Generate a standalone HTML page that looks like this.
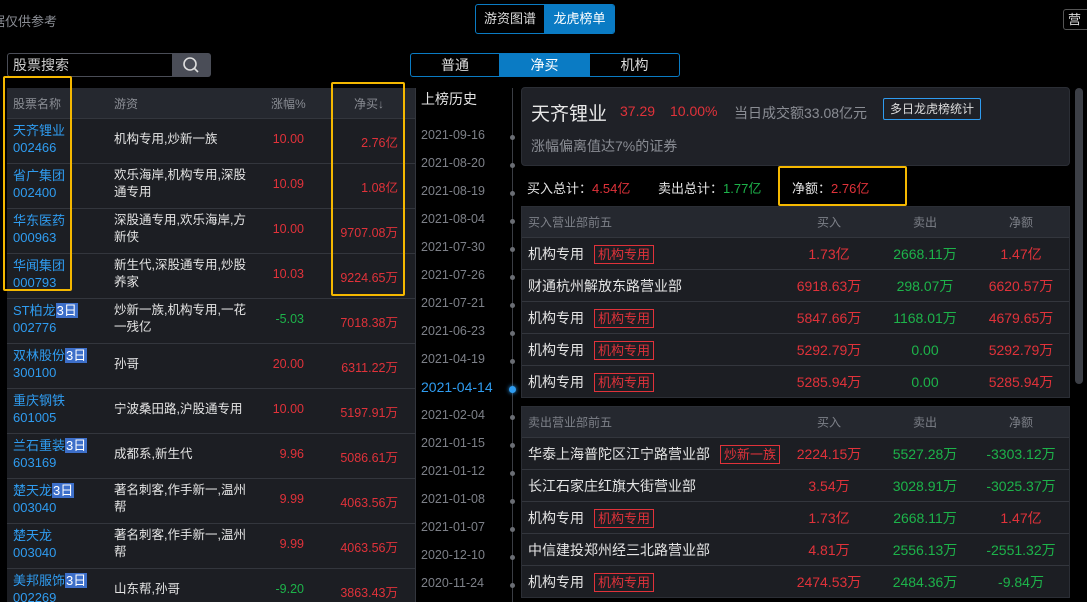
<!DOCTYPE html>
<html style="width:1087px;height:602px;overflow:hidden"><head><meta charset="utf-8"><style>
*{margin:0;padding:0;box-sizing:border-box}
body{width:1087px;height:602px;background:#000;overflow:hidden;position:relative;font-family:"Liberation Sans","Noto Sans CJK SC",sans-serif;font-size:13px;color:#ddd}
.a{position:absolute;white-space:nowrap}
.r{color:#e0323a}.g{color:#1db34a}.b{color:#2f9cf0}.gr{color:#8a8d94}
.yb{position:absolute;border:2px solid #f5b800;border-radius:2px}
.lt{position:absolute;left:7px;top:88px;width:408px;height:514px;background:#1c1e23}
.lh{position:absolute;left:0;top:0;width:408px;height:30px;background:#25282f}
.tag3{background:#3d6fc9;color:#fff;padding:0 1px}
.tbl{position:absolute;left:521px;width:549px;background:#1c1e23;border:1px solid #2b2e35}
.th{height:30px;background:#25282f;position:relative;color:#7d8088;font-size:12px}
.tr{height:32px;border-top:1px solid #33363d;position:relative;font-size:14px}
.tr span,.th span{position:absolute;top:50%;transform:translateY(-50%)}
.c1{left:6px;color:#e4e4e4}.c2{left:260px;width:94px;text-align:center}.c3{left:356px;width:94px;text-align:center}.c4{left:452px;width:94px;text-align:center}
.tg{border:1px solid #e0323a;color:#e0323a;font-size:13px;padding:0 3px;margin-left:10px;line-height:17px;display:inline-block}
.dt{position:absolute;left:421px;color:#7d8088;font-size:12.5px}
.dot{position:absolute;left:510px;width:5px;height:5px;border-radius:50%;background:#6a6d74}
</style></head><body>
<div class="a gr" style="left:-8px;top:11px;font-size:13px">据仅供参考</div>
<div class="a" style="left:475px;top:4px;width:140px;height:30px;border:1px solid #0a7bc4;border-radius:3px;overflow:hidden">
<div class="a" style="left:0;top:0;width:68px;height:28px;line-height:28px;text-align:center;color:#ddd">游资图谱</div>
<div class="a" style="left:68px;top:0;width:71px;height:28px;line-height:28px;text-align:center;background:#0a7bc4;color:#fff">龙虎榜单</div></div>
<div class="a" style="left:1063px;top:9px;width:30px;height:21px;border:1px solid #555;border-radius:3px;line-height:19px;padding-left:4px">营</div>
<div class="a" style="left:7px;top:53px;width:166px;height:24px;border:1px solid #4a4d57;border-radius:3px 0 0 3px;padding-left:5px;line-height:22px;font-size:14px;color:#ccc">股票搜索</div>
<div class="a" style="left:172px;top:53px;width:39px;height:24px;background:#4a4d57;border-radius:0 3px 3px 0">
<svg width="39" height="24"><circle cx="18" cy="11" r="6" stroke="#ddd" stroke-width="1.6" fill="none"/><line x1="22" y1="15" x2="26" y2="19" stroke="#ddd" stroke-width="1.6"/></svg></div>
<div class="a" style="left:410px;top:53px;width:270px;height:24px;border:1px solid #0a7bc4;border-radius:3px;overflow:hidden;font-size:14px">
<div class="a" style="left:0;width:88px;height:22px;line-height:22px;text-align:center">普通</div>
<div class="a" style="left:88px;width:91px;height:22px;line-height:22px;text-align:center;background:#0a7bc4;color:#fff">净买</div>
<div class="a" style="left:179px;width:89px;height:22px;line-height:22px;text-align:center">机构</div></div>

<div class="lt">
<div class="lh"><span class="a gr" style="left:6px;top:7px;font-size:12px">股票名称</span><span class="a gr" style="left:107px;top:7px;font-size:12px">游资</span><span class="a gr" style="left:264px;top:7px;font-size:12px">涨幅%</span><span class="a gr" style="left:347px;top:7px;font-size:12px">净买↓</span></div>
</div>
<div id="rows"></div>
<div class="a" style="left:415px;top:88px;width:1px;height:514px;background:#33363d"></div>
<div class="a" style="left:421px;top:89px;font-size:14px;color:#e4e4e4">上榜历史</div>
<div class="a" style="left:512px;top:88px;width:1px;height:514px;background:#3a3d44"></div>
<div id="dates"></div>

<div class="a" style="left:521px;top:87px;width:549px;height:79px;background:#1f2127;border:1px solid #2b2e35;border-radius:4px"></div>
<div class="a" style="left:531px;top:99px;font-size:19px;color:#e8e8e8">天齐锂业</div>
<div class="a r" style="left:620px;top:103px;font-size:14px">37.29</div>
<div class="a r" style="left:670px;top:103px;font-size:14px">10.00%</div>
<div class="a gr" style="left:734px;top:103px;font-size:14px">当日成交额33.08亿元</div>
<div class="a" style="left:883px;top:98px;width:98px;height:22px;border:1px solid #2f9cf0;border-radius:2px;font-size:12px;line-height:20px;text-align:center;color:#ddd">多日龙虎榜统计</div>
<div class="a gr" style="left:531px;top:136px;font-size:14px">涨幅偏离值达7%的证券</div>
<div class="a" style="left:527px;top:178px;font-size:13px;color:#e4e4e4">买入总计：<span class="r">4.54亿</span></div>
<div class="a" style="left:658px;top:178px;font-size:13px;color:#e4e4e4">卖出总计：<span class="g">1.77亿</span></div>
<div class="a" style="left:792px;top:178px;font-size:13px;color:#e4e4e4">净额：<span class="r">2.76亿</span></div>

<div class="tbl" style="top:206px">
<div class="th"><span class="c1" style="color:#7d8088">买入营业部前五</span><span class="c2">买入</span><span class="c3">卖出</span><span class="c4">净额</span></div>
<div class="tr"><span class="c1">机构专用<b class="tg" style="font-weight:normal">机构专用</b></span><span class="c2 r">1.73亿</span><span class="c3 g">2668.11万</span><span class="c4 r">1.47亿</span></div>
<div class="tr"><span class="c1">财通杭州解放东路营业部</span><span class="c2 r">6918.63万</span><span class="c3 g">298.07万</span><span class="c4 r">6620.57万</span></div>
<div class="tr"><span class="c1">机构专用<b class="tg" style="font-weight:normal">机构专用</b></span><span class="c2 r">5847.66万</span><span class="c3 g">1168.01万</span><span class="c4 r">4679.65万</span></div>
<div class="tr"><span class="c1">机构专用<b class="tg" style="font-weight:normal">机构专用</b></span><span class="c2 r">5292.79万</span><span class="c3 g">0.00</span><span class="c4 r">5292.79万</span></div>
<div class="tr"><span class="c1">机构专用<b class="tg" style="font-weight:normal">机构专用</b></span><span class="c2 r">5285.94万</span><span class="c3 g">0.00</span><span class="c4 r">5285.94万</span></div>
</div>
<div class="tbl" style="top:406px">
<div class="th"><span class="c1" style="color:#7d8088">卖出营业部前五</span><span class="c2">买入</span><span class="c3">卖出</span><span class="c4">净额</span></div>
<div class="tr"><span class="c1">华泰上海普陀区江宁路营业部<b class="tg" style="font-weight:normal">炒新一族</b></span><span class="c2 r">2224.15万</span><span class="c3 g">5527.28万</span><span class="c4 g">-3303.12万</span></div>
<div class="tr"><span class="c1">长江石家庄红旗大街营业部</span><span class="c2 r">3.54万</span><span class="c3 g">3028.91万</span><span class="c4 g">-3025.37万</span></div>
<div class="tr"><span class="c1">机构专用<b class="tg" style="font-weight:normal">机构专用</b></span><span class="c2 r">1.73亿</span><span class="c3 g">2668.11万</span><span class="c4 r">1.47亿</span></div>
<div class="tr"><span class="c1">中信建投郑州经三北路营业部</span><span class="c2 r">4.81万</span><span class="c3 g">2556.13万</span><span class="c4 g">-2551.32万</span></div>
<div class="tr"><span class="c1">机构专用<b class="tg" style="font-weight:normal">机构专用</b></span><span class="c2 r">2474.53万</span><span class="c3 g">2484.36万</span><span class="c4 g">-9.84万</span></div>
</div>
<div class="a" style="left:1075px;top:88px;width:8px;height:296px;background:#3c3f46;border-radius:4px"></div>

<div class="yb" style="left:3px;top:76px;width:69px;height:215px"></div>
<div class="yb" style="left:331px;top:82px;width:74px;height:214px"></div>
<div class="yb" style="left:778px;top:166px;width:129px;height:40px"></div>

<script>
var R=[["天齐锂业","002466","机构专用,炒新一族","10.00","2.76亿",0,0],
["省广集团","002400","欢乐海岸,机构专用,深股<br>通专用","10.09","1.08亿",0,0],
["华东医药","000963","深股通专用,欢乐海岸,方<br>新侠","10.00","9707.08万",0,0],
["华闻集团","000793","新生代,深股通专用,炒股<br>养家","10.03","9224.65万",0,0],
["ST柏龙","002776","炒新一族,机构专用,一花<br>一残亿","-5.03","7018.38万",1,1],
["双林股份","300100","孙哥","20.00","6311.22万",1,0],
["重庆钢铁","601005","宁波桑田路,沪股通专用","10.00","5197.91万",0,0],
["兰石重装","603169","成都系,新生代","9.96","5086.61万",1,0],
["楚天龙","003040","著名刺客,作手新一,温州<br>帮","9.99","4063.56万",1,0],
["楚天龙","003040","著名刺客,作手新一,温州<br>帮","9.99","4063.56万",0,0],
["美邦服饰","002269","山东帮,孙哥","-9.20","3863.43万",1,1]];
var h="";R.forEach(function(r,i){var t=118+i*45;
h+='<div class="a" style="left:7px;top:'+t+'px;width:408px;height:45px;border-top:1px solid #33363d;overflow:hidden;max-height:'+(602-t)+'px"></div>';
h+='<div class="a b" style="left:13px;top:'+(t+4)+'px;font-size:13px;line-height:17px">'+r[0]+(r[5]?'<span class="tag3">3日</span>':'')+'<br>'+r[1]+'</div>';
var two=r[2].indexOf('<br>')>0;
h+='<div class="a" style="left:114px;top:'+(t+(two?4:13))+'px;font-size:12.5px;line-height:17px;color:#e4e4e4">'+r[2]+'</div>';
h+='<div class="a '+(r[6]?'g':'r')+'" style="left:250px;width:54px;text-align:right;top:'+(t+14)+'px;font-size:12.5px">'+r[3]+'</div>';
h+='<div class="a r" style="left:320px;width:78px;text-align:right;top:'+(t+14)+'px;font-size:12.5px">'+r[4]+'</div>';});
document.getElementById('rows').innerHTML=h;
var D=["2021-09-16","2021-08-20","2021-08-19","2021-08-04","2021-07-30","2021-07-26","2021-07-21","2021-06-23","2021-04-19","2021-04-14","2021-02-04","2021-01-15","2021-01-12","2021-01-08","2021-01-07","2020-12-10","2020-11-24"];
var s="";D.forEach(function(d,i){var y=135+i*28;
if(i==9){s+='<div class="dt" style="top:'+(y-8)+'px;font-size:14px;color:#2f9cf0">'+d+'</div><div class="dot" style="top:'+(y-1)+'px;left:509px;width:7px;height:7px;background:#2f9cf0;box-shadow:0 0 4px #2f9cf0"></div>';}
else s+='<div class="dt" style="top:'+(y-7)+'px">'+d+'</div><div class="dot" style="top:'+y+'px"></div>';});
document.getElementById('dates').innerHTML=s;
</script>
</body></html>
